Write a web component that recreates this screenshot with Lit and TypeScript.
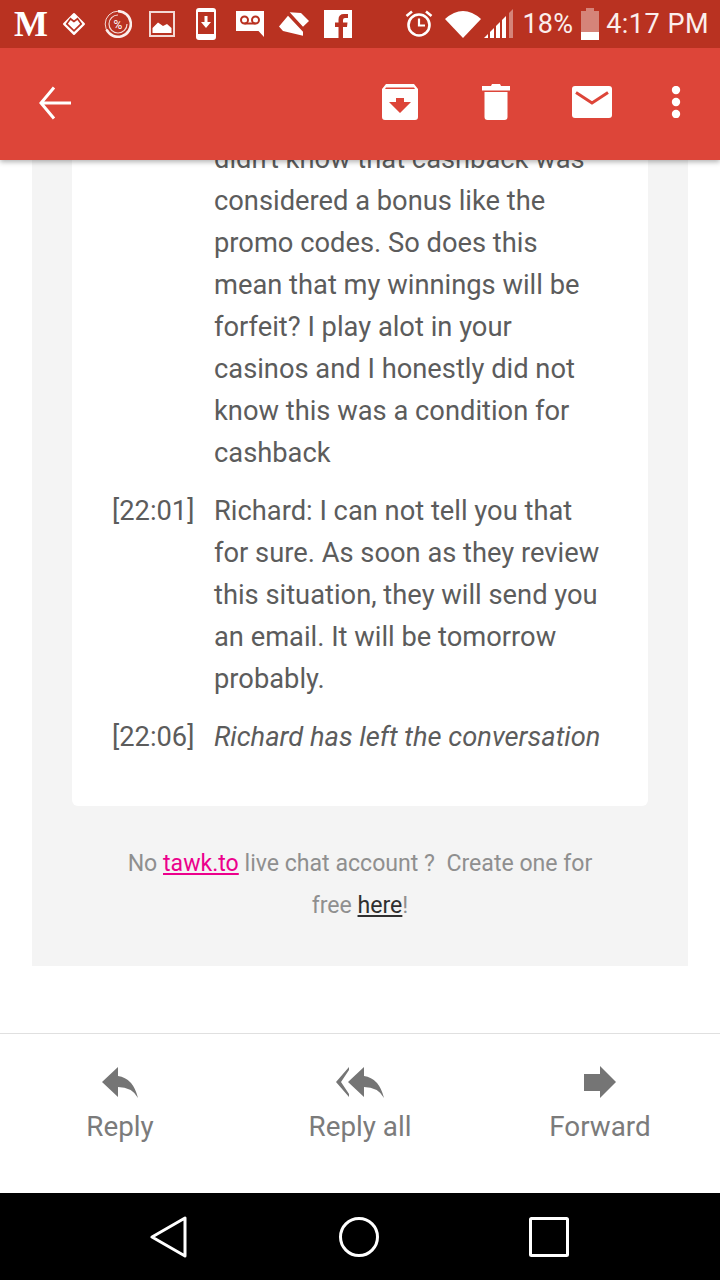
import { LitElement, html, css, svg } from "lit";
import { customElement } from "lit/decorators.js";

const ic = (w: number, h: number, body: unknown, cls = "") =>
  html`<svg class=${cls} width=${w} height=${h} viewBox="0 0 ${w} ${h}">${body}</svg>`;

const RED = "#b93221";
const BAR = "#dd4539";

@customElement("app-root")
export class AppRoot extends LitElement {
  static styles = css`
    :host { display: block; width: 720px; height: 1280px; font-family: Roboto, sans-serif; background: #fff; overflow: hidden; }
    * { box-sizing: border-box; }
    .page { height: 1280px; display: flex; flex-direction: column; }
    svg { display: block; flex: none; }
    .status { height: 48px; flex: none; background: #b93221; color: #fbeeec; display: flex; align-items: center; padding: 0 11px 0 14px; position: relative; z-index: 3; }
    .m { font: bold 36px "Liberation Serif", serif; color: #fff; width: 34px; line-height: 48px; margin-top: -1px; }
    .s1 { margin-left: 14px; }
    .s2 { margin-left: 18px; }
    .s3 { margin-left: 17px; }
    .s4 { margin-left: 21px; }
    .s5 { margin-left: 20px; }
    .s6 { margin-left: 15px; }
    .s7 { margin-left: 15px; }
    .s8 { margin-left: auto; }
    .s9 { margin-left: 12px; }
    .s10 { margin-left: 3px; }
    .pct { font-size: 27px; margin-left: 8px; letter-spacing: 0.2px; }
    .bat { margin-left: 8px; }
    .time { font-size: 27px; margin-left: 7px; letter-spacing: 0.5px; }
    .bar { height: 112px; flex: none; background: #dd4539; box-shadow: 0 2px 5px rgba(0,0,0,.3); position: relative; z-index: 2; display: flex; align-items: center; padding: 0 38px 0 38px; }
    .back { margin-top: -3px; }
    .tools { margin-left: auto; display: flex; align-items: center; }
    .tools svg { margin-top: -4px; }
    .t2 { margin-left: 64px; }
    .t3 { margin-left: 62px; }
    .t4 { margin-left: 58px; }
    .content { flex: 1; overflow: hidden; min-height: 0; }
    .panel { margin: -22px 32px 0; background: #f4f4f4; padding: 0 40px 39px; }
    .card { background: #fff; border-radius: 0 0 6px 6px; padding: 0 40px 48px; display: grid; grid-template-columns: 102px 1fr; row-gap: 16px; font-size: 27.3px; line-height: 42px; color: #5c5c5c; }
    .t { white-space: nowrap; }
    .msg { white-space: pre-line; }
    .em { font-style: italic; }
    .foot { margin-top: 37px; text-align: center; font-size: 23.1px; line-height: 42px; color: #8f8f8f; white-space: pre-wrap; }
    .foot a { text-decoration: underline; }
    .pink { color: #ec008c; }
    .dark { color: #2f2f2f; }
    .actions { height: 160px; flex: none; border-top: 1px solid #e0e0e0; background: #fff; display: grid; grid-template-columns: repeat(3, 240px); }
    .act { display: flex; flex-direction: column; align-items: center; color: #7b7b7b; font-size: 27.8px; padding-top: 32px; }
    .act svg { height: 34px; }
    .act span { margin-top: 7px; line-height: 40px; }
    .nav { height: 87px; flex: none; background: #000; display: flex; align-items: center; padding-left: 150px; }
    .n2 { margin-left: 148px; }
    .n3 { margin-left: 148px; }
  `;

  render() {
    return html`<div class="page">
      <div class="status">
        <span class="m">M</span>
        ${ic(24, 24, svg`<path fill="#fff" stroke="#fff" stroke-width="2" stroke-linejoin="round" d="M12 2 22 12 12 22 2 12Z"/><path fill="none" stroke="${RED}" stroke-width="1.700" d="M12 9.500 8.500 6.800 4.800 11.800 12 18.800 19.200 11.800 15.500 6.800Z"/>`, "s1")}
        ${ic(28, 28, svg`<circle cx="14" cy="14" r="12.800" fill="none" stroke="#f3d9d5" stroke-width="1"/><path fill="none" stroke="#fbeeec" stroke-width="2.600" d="M14 1.200A12.800 12.800 0 1 1 2.500 19.500"/><path fill="none" stroke="#f3d9d5" stroke-width="1.200" d="M14 5A9 9 0 1 0 23 14"/><text x="14" y="18.500" font-size="12" font-family="Roboto" fill="#fff" text-anchor="middle">%</text>`, "s2")}
        ${ic(26, 26, svg`<rect x="1" y="1" width="24" height="24" fill="none" stroke="#f3d9d5" stroke-width="2"/><path fill="#fff" d="M3.500 22V17L9 11.500 14 15 18 13 22.500 17V22Z"/>`, "s3")}
        ${ic(20, 32, svg`<rect width="20" height="32" rx="3" fill="#fff"/><path fill="${RED}" d="M2 4H18V26H2Z"/><path fill="#fff" d="M8.500 8H11.500V14H15L10 20 5 14H8.500Z"/>`, "s4")}
        ${ic(28, 28, svg`<path fill="#fff" d="M0 1H28V27L22.500 21H0Z"/><circle cx="8.500" cy="10" r="3.500" fill="none" stroke="${RED}" stroke-width="2"/><circle cx="19.500" cy="10" r="3.500" fill="none" stroke="${RED}" stroke-width="2"/><path stroke="${RED}" stroke-width="2" d="M8.500 13.500H19.500"/>`, "s5")}
        ${ic(30, 24, svg`<path fill="#fff" d="M0 14.500 9 3.700 24 19.700 24 23.700 4 19ZM10.700 0.300 22 1 30 9 24 14.700Z"/>`, "s6")}
        ${ic(28, 28, svg`<path fill="#fff" d="M0 0H28V28H19V17H23L23.500 12.500H19V10Q19 8 21 8H24V4H20Q14.500 4 14.500 9.500V12.500H11V17H14.500V28H0Z"/>`, "s7")}
        ${ic(28, 30, svg`<circle cx="14" cy="16" r="10.500" fill="none" stroke="#fff" stroke-width="2.600"/><path fill="none" stroke="#fff" stroke-width="2.200" d="M14 9.500V16.500H20"/><path stroke="#fff" stroke-width="2.600" d="M1.500 7 7 2.500M26.500 7 21 2.500"/>`, "s8")}
        ${ic(36, 28, svg`<path fill="#fff" d="M0 9Q18 -7 36 9L18 28Z"/>`, "s9")}
        ${ic(30, 30, svg`<path fill="#fff" d="M0 29 4 25V29ZM6 23 10 19V29H6ZM12 17 16 13V29H12ZM18 11 22 7V29H18Z"/><path fill="#fff" fill-opacity=".4" d="M25 4 29 0V29H25Z"/>`, "s10")}
        <span class="pct">18%</span>
        ${ic(18, 32, svg`<path fill="#fff" fill-opacity=".4" d="M5 0H13V3H18V32H0V3H5Z"/><rect y="24" width="18" height="8" fill="#fff"/>`, "bat")}
        <span class="time">4:17 PM</span>
      </div>

      <div class="bar">
        ${ic(34, 34, svg`<path fill="none" stroke="#fff" stroke-width="3" d="M33 17H3M16 1.500 3 17 16 32.500" />`, "back")}
        <div class="tools">
          ${ic(36, 36, svg`<path fill="#fff" fill-rule="evenodd" d="M4 0H32L36 5V33Q36 36 33 36H3Q0 36 0 33V5ZM4 3.500H32L33 5H3ZM14 14V18H7L18 29 29 18H22V14Z"/>`)}
          ${ic(28, 36, svg`<path fill="#fff" d="M10 0H18L19 2H28V6.500H0V2H9ZM2.500 8H25.500V33Q25.500 36 22.500 36H5.500Q2.500 36 2.500 33Z"/>`, "t2")}
          ${ic(40, 32, svg`<rect width="40" height="32" rx="3" fill="#fff"/><path fill="none" stroke="${BAR}" stroke-width="3" d="M4 6.500 20 17 36 6.500"/>`, "t3")}
          ${ic(12, 32, svg`<circle cx="6" cy="4" r="4.200" fill="#fff"/><circle cx="6" cy="16" r="4.200" fill="#fff"/><circle cx="6" cy="28" r="4.200" fill="#fff"/>`, "t4")}
        </div>
      </div>

      <div class="content">
        <div class="panel">
          <div class="card">
            <div></div>
            <div class="msg">didn't know that cashback was
considered a bonus like the
promo codes. So does this
mean that my winnings will be
forfeit? I play alot in your
casinos and I honestly did not
know this was a condition for
cashback</div>
            <div class="t">[22:01]</div>
            <div class="msg">Richard: I can not tell you that
for sure. As soon as they review
this situation, they will send you
an email. It will be tomorrow
probably.</div>
            <div class="t">[22:06]</div>
            <div class="em">Richard has left the conversation</div>
          </div>
          <div class="foot">No <a class="pink">tawk.to</a> live chat account ?  Create one for
free <a class="dark">here</a>!</div>
        </div>
      </div>

      <div class="actions">
        <div class="act">
          ${ic(36, 34, svg`<path fill="#757575" d="M16 1V10Q31 12 36 32 30 21 16 21V31L0 16Z"/>`)}
          <span>Reply</span>
        </div>
        <div class="act">
          ${ic(48, 34, svg`<path fill="#757575" d="M28 1V10Q43 12 48 32 42 21 28 21V31L12 16ZM13 1V4L5 16 13 28V31L0 16Z"/>`)}
          <span>Reply all</span>
        </div>
        <div class="act">
          ${ic(32, 34, svg`<path fill="#757575" d="M16 0 32 16 16 32V25H0V8H16Z"/>`)}
          <span>Forward</span>
        </div>
      </div>

      <div class="nav">
        ${ic(40, 42, svg`<path fill="none" stroke="#fff" stroke-width="3" stroke-linejoin="round" d="M35 2V40L2 21Z"/>`)}
        ${ic(42, 42, svg`<circle cx="21" cy="21" r="18.500" fill="none" stroke="#fff" stroke-width="3"/>`, "n2")}
        ${ic(42, 42, svg`<rect x="2.500" y="2.500" width="37" height="37" rx="1" fill="none" stroke="#fff" stroke-width="3"/>`, "n3")}
      </div>
    </div>`;
  }
}
